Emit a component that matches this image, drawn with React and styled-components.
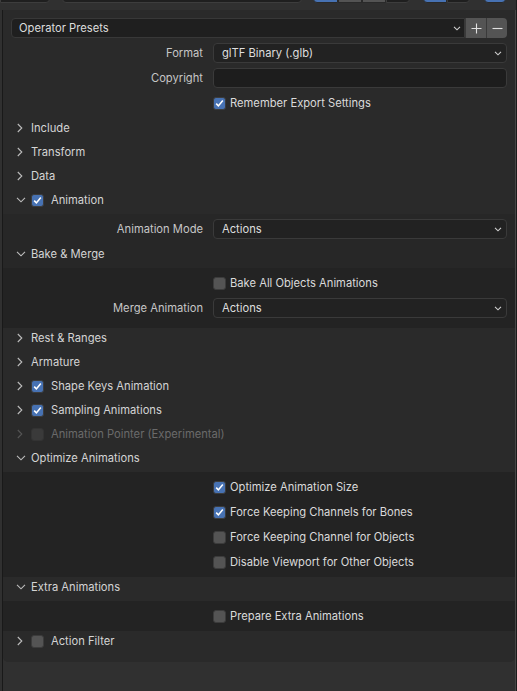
import React from 'react';
import styled, { createGlobalStyle } from 'styled-components';

const GlobalStyle = createGlobalStyle`
  html, body {
    margin: 0;
    padding: 0;
    background: #303030;
  }
  body {
    font-family: Inter, "Noto Sans", sans-serif;
    font-size: 11.2px;
    color: #d6d6d6;
    -webkit-font-smoothing: antialiased;
  }
`;

const Page = styled.div`
  display: flex;
  width: 517px;
  min-height: 691px;
  background: #303030;
`;

const Main = styled.div`
  flex: 1;
  display: flex;
  flex-direction: column;
`;

const Gutter = styled.div`
  width: 1px;
  background: #1b1b1b;
`;

const TopStrip = styled.div`
  display: flex;
  align-items: flex-end;
  height: 3px;
  overflow: hidden;
`;

const toolColors = {
  blue: '#4772b3',
  gray: '#545454',
  dark: '#1f1f1f',
};

const ToolBtn = styled.div`
  flex: none;
  box-sizing: border-box;
  width: ${p => p.$w}px;
  margin-left: ${p => p.$ml || 0}px;
  height: 20px;
  background: ${p => toolColors[p.$tone]};
  border: 1px solid ${p => (p.$tone === 'dark' ? '#3d3d3d' : '#2a2a2a')};
  border-radius: ${p => p.$radius || '0'};
`;

const Region = styled.div`
  flex: 1;
  display: flex;
  flex-direction: column;
  margin: 7px 0 0 2px;
  border-left: 1px solid #191919;
  border-right: 1px solid #454545;
`;

const Panel = styled.div`
  display: flex;
  flex-direction: column;
  background: #2a2a2a;
  border-radius: 0 0 5px 5px;
  padding-bottom: 7px;
`;

const TopSection = styled.div`
  display: flex;
  flex-direction: column;
  gap: 5px;
  padding: 8px 0 5px;
`;

const PresetRow = styled.div`
  display: flex;
  height: 20px;
  margin: 0 8px;
`;

const PresetSelect = styled.div`
  flex: 1;
  display: flex;
  align-items: center;
  justify-content: space-between;
  box-sizing: border-box;
  padding: 0 3px 0 7px;
  background: #1f1f1f;
  border: 1px solid #383838;
  border-radius: 4px 0 0 4px;
  color: #dcdcdc;
`;

const IconButton = styled.div`
  width: 20px;
  display: flex;
  align-items: center;
  justify-content: center;
  background: #545454;
  border-left: 1px solid #3a3a3a;
  border-radius: ${p => (p.$last ? '0 4px 4px 0' : '0')};
`;

const PropRow = styled.div`
  display: grid;
  grid-template-columns: 192px 1fr;
  column-gap: 10px;
  align-items: center;
  height: 20px;
  padding: 0 8px;
`;

const Label = styled.span`
  text-align: right;
  color: #c6c6c6;
`;

const Field = styled.div`
  height: 20px;
  box-sizing: border-box;
  display: flex;
  align-items: center;
  justify-content: space-between;
  padding: 0 4px 0 8px;
  background: ${p => (p.$input ? '#1d1d1d' : '#222222')};
  border: 1px solid #3a3a3a;
  border-radius: 4px;
  color: #dedede;
`;

const CheckItem = styled.label`
  display: flex;
  align-items: center;
  gap: 4px;
  color: ${p => (p.$disabled ? '#6c6c6c' : '#dadada')};
`;

const Box = styled.span`
  flex: none;
  width: 13px;
  height: 13px;
  box-sizing: border-box;
  border-radius: 3px;
  display: flex;
  align-items: center;
  justify-content: center;
  background: ${p => (p.$checked ? '#4772b3' : p.$disabled ? '#3a3a3a' : '#545454')};
  border: 1px solid ${p => (p.$disabled ? '#333333' : '#3c3c3c')};
  margin-right: ${p => p.$mr || 0}px;
`;

const HeaderRow = styled.div`
  display: flex;
  align-items: center;
  height: 24px;
  box-sizing: border-box;
  padding: 0 0 4px 10px;
  color: ${p => (p.$disabled ? '#6a6a6a' : '#d4d4d4')};
`;

const ChevronSlot = styled.span`
  width: 18px;
  display: flex;
  align-items: center;
  padding-left: ${p => (p.$open ? 3 : 4)}px;
  box-sizing: border-box;
`;

const bodyTones = { a: '#272727', b: '#232323' };

const Body = styled.div`
  display: flex;
  flex-direction: column;
  gap: 5px;
  padding: 5px 0 ${p => p.$pb || 0}px;
  background: ${p => bodyTones[p.$tone]};
`;

const Chevron = ({ open, color = '#bdbdbd' }) =>
  open ? (
    <svg width="10" height="6" viewBox="0 0 10 6">
      <polyline points="1,0.8 5,4.8 9,0.8" fill="none" stroke={color} strokeWidth="1.1" />
    </svg>
  ) : (
    <svg width="6" height="10" viewBox="0 0 6 10">
      <polyline points="0.8,1 4.8,5 0.8,9" fill="none" stroke={color} strokeWidth="1.1" />
    </svg>
  );

const SmallDown = () => (
  <svg width="8" height="5" viewBox="0 0 8 5">
    <polyline points="1,0.8 4,3.8 7,0.8" fill="none" stroke="#d0d0d0" strokeWidth="1.1" />
  </svg>
);

const Checkbox = ({ checked, disabled, mr }) => (
  <Box $checked={checked} $disabled={disabled} $mr={mr}>
    {checked && (
      <svg width="11" height="11" viewBox="0 0 11 11">
        <polyline points="2.2,5.6 4.4,7.9 8.8,2.6" fill="none" stroke="#ffffff" strokeWidth="1.6" />
      </svg>
    )}
  </Box>
);

const Header = ({ open, check, disabled, children }) => (
  <HeaderRow $disabled={disabled}>
    <ChevronSlot $open={open}>
      <Chevron open={open} color={disabled ? '#555555' : '#bdbdbd'} />
    </ChevronSlot>
    {check !== undefined && <Checkbox checked={check} disabled={disabled} mr={7} />}
    {children}
  </HeaderRow>
);

const SelectProp = ({ label, value }) => (
  <PropRow>
    <Label>{label}</Label>
    <Field>
      {value}
      <SmallDown />
    </Field>
  </PropRow>
);

const CheckProp = ({ checked, children }) => (
  <PropRow>
    <span />
    <CheckItem>
      <Checkbox checked={checked} />
      {children}
    </CheckItem>
  </PropRow>
);

const optimizeOptions = [
  ['Optimize Animation Size', true],
  ['Force Keeping Channels for Bones', true],
  ['Force Keeping Channel for Objects', false],
  ['Disable Viewport for Other Objects', false],
];

export default function App() {
  return (
    <Page>
      <GlobalStyle />
      <Main>
        <TopStrip>
          <ToolBtn $tone="dark" $w={50} $radius="0 0 4px 0" />
          <ToolBtn $tone="dark" $w={240} $ml={12} $radius="0 0 4px 4px" />
          <ToolBtn $tone="blue" $w={25} $ml={11} $radius="0 0 0 4px" />
          <ToolBtn $tone="gray" $w={24} />
          <ToolBtn $tone="gray" $w={24} />
          <ToolBtn $tone="dark" $w={24} $radius="0 0 4px 0" />
          <ToolBtn $tone="blue" $w={24} $ml={13} $radius="0 0 0 4px" />
          <ToolBtn $tone="dark" $w={23} $radius="0 0 4px 0" />
          <ToolBtn $tone="blue" $w={22} $ml={14} $radius="0 0 4px 4px" />
        </TopStrip>
        <Region>
          <Panel>
            <TopSection>
              <PresetRow>
                <PresetSelect>
                  Operator Presets
                  <SmallDown />
                </PresetSelect>
                <IconButton>
                  <svg width="11" height="11" viewBox="0 0 11 11">
                    <path d="M5.5 0.5v10M0.5 5.5h10" stroke="#e0e0e0" strokeWidth="1.1" />
                  </svg>
                </IconButton>
                <IconButton $last>
                  <svg width="11" height="11" viewBox="0 0 11 11">
                    <path d="M0.5 5.5h10" stroke="#e0e0e0" strokeWidth="1.1" />
                  </svg>
                </IconButton>
              </PresetRow>
              <SelectProp label="Format" value="glTF Binary (.glb)" />
              <PropRow>
                <Label>Copyright</Label>
                <Field $input />
              </PropRow>
              <CheckProp checked>Remember Export Settings</CheckProp>
            </TopSection>

            <Header>Include</Header>
            <Header>Transform</Header>
            <Header>Data</Header>
            <Header open check>Animation</Header>

            <Body $tone="a">
              <SelectProp label="Animation Mode" value="Actions" />
              <Header open>Bake &amp; Merge</Header>
            </Body>
            <Body $tone="b" $pb={10}>
              <CheckProp checked={false}>Bake All Objects Animations</CheckProp>
              <SelectProp label="Merge Animation" value="Actions" />
            </Body>

            <Header>Rest &amp; Ranges</Header>
            <Header>Armature</Header>
            <Header check>Shape Keys Animation</Header>
            <Header check>Sampling Animations</Header>
            <Header check={false} disabled>Animation Pointer (Experimental)</Header>
            <Header open>Optimize Animations</Header>

            <Body $tone="b" $pb={5}>
              {optimizeOptions.map(([text, on]) => (
                <CheckProp key={text} checked={on}>{text}</CheckProp>
              ))}
            </Body>

            <Header open>Extra Animations</Header>
            <Body $tone="b" $pb={5}>
              <CheckProp checked={false}>Prepare Extra Animations</CheckProp>
            </Body>

            <Header check={false}>Action Filter</Header>
          </Panel>
        </Region>
      </Main>
      <Gutter />
    </Page>
  );
}
